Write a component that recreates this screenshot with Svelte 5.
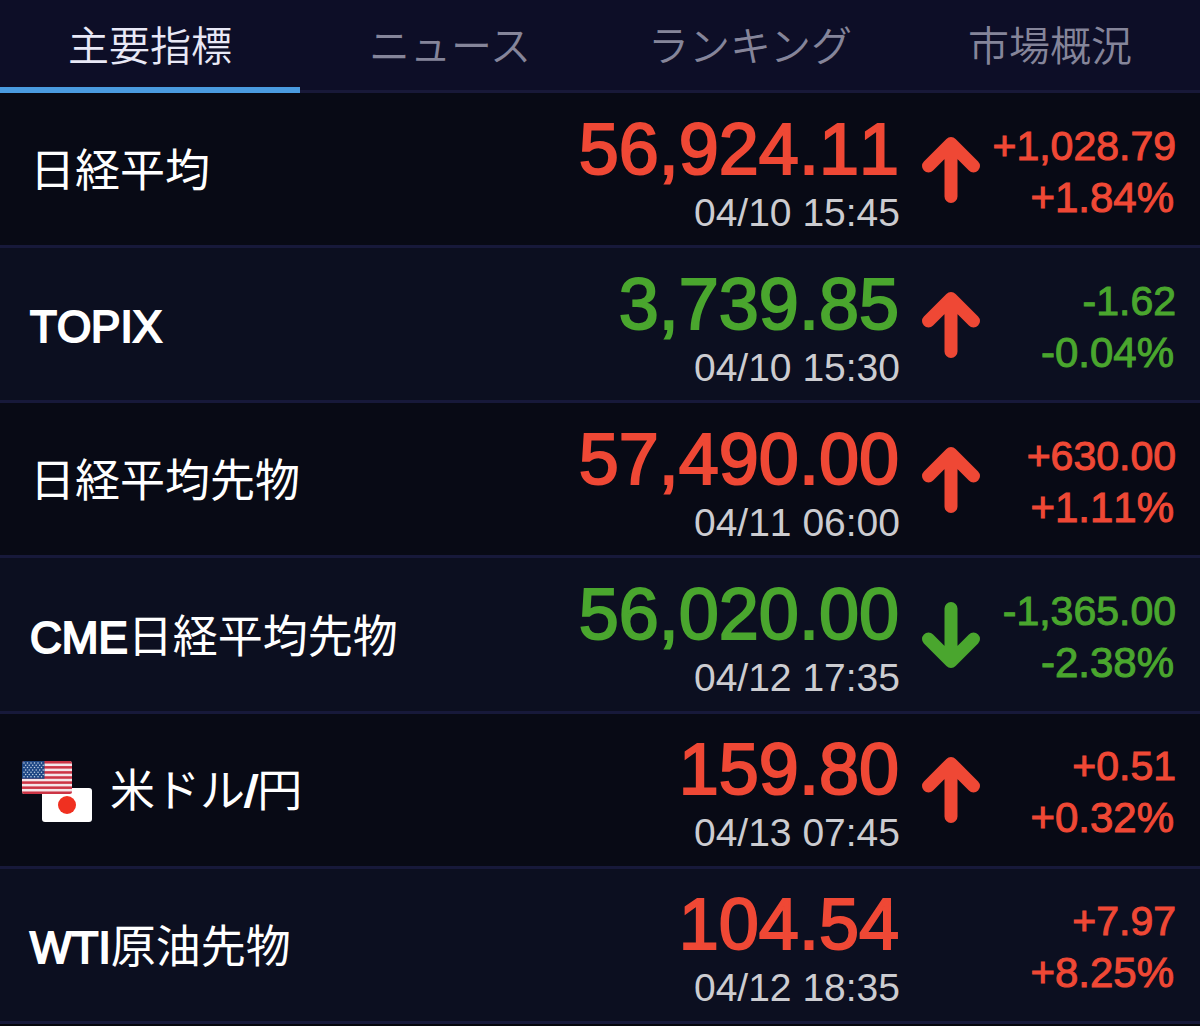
<script>
  const tabs = ['主要指標', 'ニュース', 'ランキング', '市場概況'];
  let active = $state(0);

  const rows = [
    { name: '日経平均', value: '56,924.11', time: '04/10 15:45', diff: '+1,028.79', pct: '+1.84%', tone: 'up', arrow: 'up' },
    { name: 'TOPIX', value: '3,739.85', time: '04/10 15:30', diff: '-1.62', pct: '-0.04%', tone: 'down', arrow: 'up' },
    { name: '日経平均先物', value: '57,490.00', time: '04/11 06:00', diff: '+630.00', pct: '+1.11%', tone: 'up', arrow: 'up' },
    { name: 'CME日経平均先物', value: '56,020.00', time: '04/12 17:35', diff: '-1,365.00', pct: '-2.38%', tone: 'down', arrow: 'down' },
    { name: '米ドル/円', value: '159.80', time: '04/13 07:45', diff: '+0.51', pct: '+0.32%', tone: 'up', arrow: 'up', flags: true },
    { name: 'WTI原油先物', value: '104.54', time: '04/12 18:35', diff: '+7.97', pct: '+8.25%', tone: 'up', arrow: null }
  ];

  // Latin runs are drawn heavier than the Japanese ones.
  const runs = (name) => name.match(/[A-Z/]+|[^A-Z/]+/g).map((text) => ({ text, latin: /^[A-Z/]/.test(text) }));

  const stripes = [0, 1, 2, 3, 4, 5, 6];
  const stars = [];
  for (let r = 0; r < 7; r++) {
    for (let c = 0; c < 6; c++) {
      stars.push({ x: 2 + c * 3.5 + (r % 2 ? 1.7 : 0), y: 2 + r * 2.3 });
    }
  }
</script>

<main class="page">
  <div class="tabs" role="tablist">
    {#each tabs as tab, i}
      <button class="tab" class:active={active === i} role="tab" aria-selected={active === i} onclick={() => (active = i)}>{tab}</button>
    {/each}
  </div>

  <table class="quotes">
    <tbody>
      {#each rows as row}
        <tr>
          <th class="name" class:flagged={row.flags} scope="row">
            <div class="label">
              {#if row.flags}
                <svg class="flags" viewBox="0 0 70 61" aria-hidden="true">
                  <defs>
                    <clipPath id="us"><rect width="50" height="33" rx="2.5" /></clipPath>
                  </defs>
                  <rect x="20" y="27" width="50" height="34" rx="3" fill="#fff" />
                  <circle cx="45" cy="44" r="9" fill="#f03020" />
                  <g clip-path="url(#us)">
                    <rect width="50" height="33" fill="#f4e6ea" />
                    {#each stripes as s}
                      <rect y={s * 5.08} width="50" height="2.54" fill="#cc3445" />
                    {/each}
                    <rect width="22.5" height="17.8" fill="#1f4784" />
                    {#each stars as star}
                      <circle cx={star.x} cy={star.y} r="0.75" fill="#c3d2e6" />
                    {/each}
                  </g>
                </svg>
              {/if}
              <span>{#each runs(row.name) as run}<span class:latin={run.latin}>{run.text}</span>{/each}</span>
            </div>
          </th>
          <td class="price">
            <div class="value {row.tone}">{row.value}</div>
            <time class="time">{row.time}</time>
          </td>
          <td class="direction">
            {#if row.arrow}
              <svg class="arrow {row.arrow}" viewBox="0 0 58 66" role="img" aria-label={row.arrow === 'up' ? '上昇' : '下落'}>
                {#if row.arrow === 'up'}
                  <path d="M29 59.5V6.5M6.5 29L29 6.5L51.5 29" />
                {:else}
                  <path d="M29 6.5V59.5M6.5 37L29 59.5L51.5 37" />
                {/if}
              </svg>
            {/if}
          </td>
          <td class="change {row.tone}">
            <div>{row.diff}</div>
            <div class="percent">{row.pct}</div>
          </td>
        </tr>
      {/each}
    </tbody>
  </table>
</main>

<style>
  :global(body) {
    margin: 0;
    background: #05060c;
  }

  .page {
    font-family: 'Liberation Sans', 'Noto Sans CJK JP', sans-serif;
    font-kerning: none;
    color: #fff;
  }

  .tabs {
    display: grid;
    grid-template-columns: repeat(4, 1fr);
    background: #0d0e27;
  }

  .tab {
    height: 93px;
    padding: 0 0 3px;
    border: 0;
    border-bottom: 3px solid #181938;
    background: none;
    color: #85859a;
    font: 350 41px/1 'Noto Sans CJK JP', sans-serif;
    cursor: pointer;
  }

  .tab.active {
    padding: 0;
    border-bottom: 6px solid #4a9be0;
    color: #e8e8f6;
  }

  .quotes {
    width: 100%;
    height: calc(100vh - 95px);
    border-collapse: separate;
    border-spacing: 0;
    table-layout: fixed;
  }

  tr {
    background: #080a15;
  }

  tr:nth-child(even) {
    background: #0c0f20;
  }

  th,
  td {
    box-sizing: border-box;
    padding: 0;
    border-bottom: 3px solid #17193a;
    vertical-align: middle;
  }

  .name {
    padding: 6px 0 0 30px;
    font-size: 45px;
    font-weight: 400;
    line-height: 64px;
    text-align: left;
    white-space: nowrap;
  }

  .name.flagged {
    padding: 4px 0 0 22px;
  }

  .latin {
    font-size: 44px;
    -webkit-text-stroke: 2px currentColor;
  }

  .label {
    display: flex;
    align-items: center;
    gap: 18px;
  }

  .flags {
    width: 70px;
    height: 61px;
  }

  .price {
    width: 338px;
    padding-top: 12px;
    text-align: right;
  }

  .value {
    margin-bottom: 3px;
    padding-right: 1px;
    font-size: 72px;
    line-height: 72px;
    -webkit-text-stroke: 2px currentColor;
  }

  .time {
    display: block;
    color: #ccccd0;
    font-size: 39px;
    line-height: 50px;
  }

  .direction {
    width: 84px;
    padding: 1px 0 0 22px;
  }

  .arrow {
    display: block;
    width: 58px;
    height: 66px;
    fill: none;
    stroke: #ef4835;
    stroke-width: 13;
    stroke-linecap: round;
    stroke-linejoin: round;
  }

  .arrow.down {
    stroke: #4aa62e;
  }

  .change {
    width: 216px;
    padding: 5px 24px 0 0;
    font-size: 41px;
    line-height: 51px;
    text-align: right;
    white-space: nowrap;
    -webkit-text-stroke: 1px currentColor;
  }

  .percent {
    padding-right: 2px;
    font-size: 42px;
  }

  .up {
    color: #ef4835;
  }

  .down {
    color: #4aa62e;
  }
</style>
